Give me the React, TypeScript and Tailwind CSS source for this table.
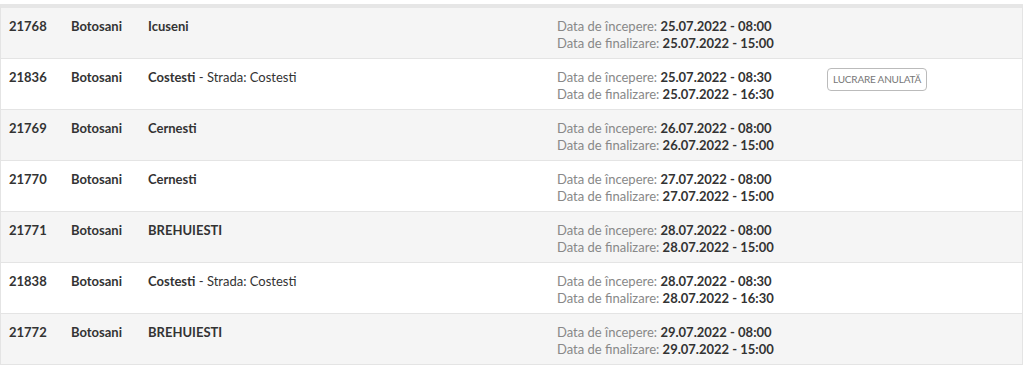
const rows = [
  { id: "21768", county: "Botosani", place: "Icuseni", street: "", start: "25.07.2022 - 08:00", end: "25.07.2022 - 15:00", cancelled: false },
  { id: "21836", county: "Botosani", place: "Costesti", street: "Strada: Costesti", start: "25.07.2022 - 08:30", end: "25.07.2022 - 16:30", cancelled: true },
  { id: "21769", county: "Botosani", place: "Cernesti", street: "", start: "26.07.2022 - 08:00", end: "26.07.2022 - 15:00", cancelled: false },
  { id: "21770", county: "Botosani", place: "Cernesti", street: "", start: "27.07.2022 - 08:00", end: "27.07.2022 - 15:00", cancelled: false },
  { id: "21771", county: "Botosani", place: "BREHUIESTI", street: "", start: "28.07.2022 - 08:00", end: "28.07.2022 - 15:00", cancelled: false },
  { id: "21838", county: "Botosani", place: "Costesti", street: "Strada: Costesti", start: "28.07.2022 - 08:30", end: "28.07.2022 - 16:30", cancelled: false },
  { id: "21772", county: "Botosani", place: "BREHUIESTI", street: "", start: "29.07.2022 - 08:00", end: "29.07.2022 - 15:00", cancelled: false },
];

export default function App() {
  return (
    <div className="w-[1026px] h-[368px] bg-white pt-[4px] text-[13px] leading-[17px] text-[#333]" style={{ fontFamily: "Lato, 'Open Sans', sans-serif" }}>
      <div className="w-[1023px] border-t-[4px] border-[#e6e6e6] border-x border-x-[#e4e4e4]">
        {rows.map((r, i) => (
          <div key={r.id} className={`flex h-[51px] border-b border-[#e4e4e4] ${i % 2 === 0 ? "bg-[#f5f5f5]" : "bg-white"}`}>
            <div className="w-[61px] pl-[8px] pt-[10px] font-bold">{r.id}</div>
            <div className="w-[77px] pl-[9px] pt-[10px] font-bold">{r.county}</div>
            <div className="w-[409px] pl-[9px] pt-[10px]">
              <span className="font-bold">{r.place}</span>
              {r.street && <span> - {r.street}</span>}
            </div>
            <div className="w-[270px] pl-[9px] pt-[10px]">
              <div><span className="text-[#888]">Data de începere: </span><span className="font-bold">{r.start}</span></div>
              <div><span className="text-[#888]">Data de finalizare: </span><span className="font-bold">{r.end}</span></div>
            </div>
            <div className="flex-1 pl-[9px] pt-[9px]">
              {r.cancelled && (
                <span className="inline-flex h-[23px] items-center rounded-[4px] border border-[#bbb] px-[5px] text-[10px] tracking-[-0.2px] text-[#777]">
                  LUCRARE ANULATĂ
                </span>
              )}
            </div>
          </div>
        ))}
      </div>
    </div>
  );
}
